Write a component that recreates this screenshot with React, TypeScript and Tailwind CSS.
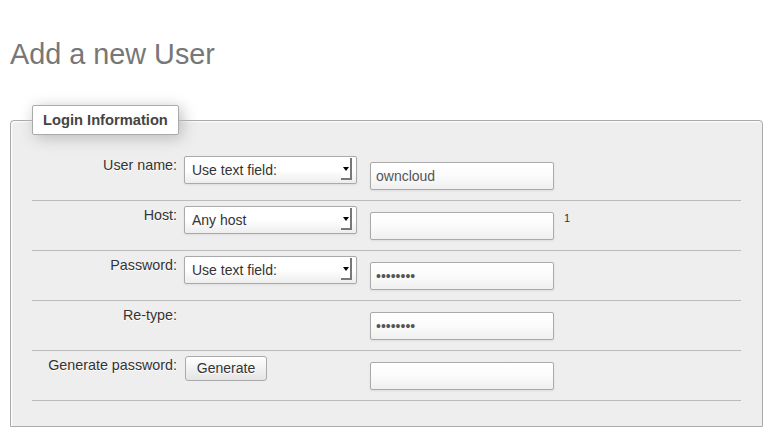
import type { ReactNode } from "react";

const FONT = "font-['Liberation_Sans','Arial',sans-serif]";

function SelectBox({ value }: { value: string }) {
  return (
    <div className="relative ml-[7px] mt-[5px] h-[28px] w-[173px]">
      <select
        defaultValue={value}
        className="h-full w-full appearance-none rounded-[2px] border border-[#aaa] bg-gradient-to-b from-white via-white to-[#ededed] pl-[7px] text-[14px] text-[#333] shadow-[0_1px_2px_#ddd] outline-none"
      >
        <option>{value}</option>
      </select>
      {/* gtk style dropdown arrow */}
      <span className="pointer-events-none absolute right-[5px] top-[2px] flex h-[22px] w-[11px] items-center justify-center border-r-2 border-b-2 border-[#777] bg-white pt-[2px]">
        <svg width="6" height="4" viewBox="0 0 6 4">
          <path d="M0 0h6L3 4z" fill="#000" />
        </svg>
      </span>
    </div>
  );
}

function TextField({ type = "text", value = "" }: { type?: string; value?: string }) {
  return (
    <input
      type={type}
      defaultValue={value}
      className="ml-[13px] mt-[11px] h-[28px] w-[184px] rounded-[2px] border border-[#aaa] bg-gradient-to-b from-white via-[#fbfbfb] to-[#efefef] pl-[5px] text-[14px] text-[#555] shadow-[0_1px_2px_#ddd] outline-none"
    />
  );
}

function Row({ label, middle, field, note }: { label: string; middle?: ReactNode; field: ReactNode; note?: string }) {
  return (
    <div className="flex h-[50px] items-start border-b border-[#bbb]">
      <label className="w-[145px] pt-[6px] text-right text-[14.3px] leading-[16px] text-[#333] [text-shadow:0_1px_0_#fff]">
        {label}
      </label>
      <div className="w-[180px]">{middle}</div>
      {field}
      {note && <span className="ml-[10px] mt-[11px] text-[11px] leading-[13px] text-[#333]">{note}</span>}
    </div>
  );
}

export default function App() {
  return (
    <div className={`${FONT} min-h-screen bg-white px-[10px]`}>
      <h2 className="pt-[38px] text-[28.8px] leading-[33px] font-normal text-[#777] [text-shadow:0_1px_0_#fff]">
        Add a new User
      </h2>

      <fieldset className="mt-[34px] rounded-tl-[4px] rounded-tr-[4px] border border-[#aaa] bg-[#eee] px-[21px] pt-[16px] pb-[25px] shadow-[inset_1px_1px_2px_#fff]">
        <legend className="rounded-[2px] border border-[#aaa] bg-white px-[10px] py-[5px] text-[14.7px] leading-[18px] font-bold text-[#444] shadow-[3px_3px_15px_#bbb]">
          Login Information
        </legend>

        <Row label="User name:" middle={<SelectBox value="Use text field:" />} field={<TextField value="owncloud" />} />
        <Row label="Host:" middle={<SelectBox value="Any host" />} field={<TextField />} note="1" />
        <Row label="Password:" middle={<SelectBox value="Use text field:" />} field={<TextField type="password" value="abcdefgh" />} />
        <Row label="Re-type:" field={<TextField type="password" value="abcdefgh" />} />
        <Row
          label="Generate password:"
          middle={
            <button
              type="button"
              className="ml-[8px] mt-[5px] h-[25px] w-[82px] rounded-[3px] border border-[#aaa] bg-gradient-to-b from-white to-[#e4e4e4] text-[14px] text-[#333] [text-shadow:0_1px_0_#fff]"
            >
              Generate
            </button>
          }
          field={<TextField />}
        />
      </fieldset>
    </div>
  );
}
